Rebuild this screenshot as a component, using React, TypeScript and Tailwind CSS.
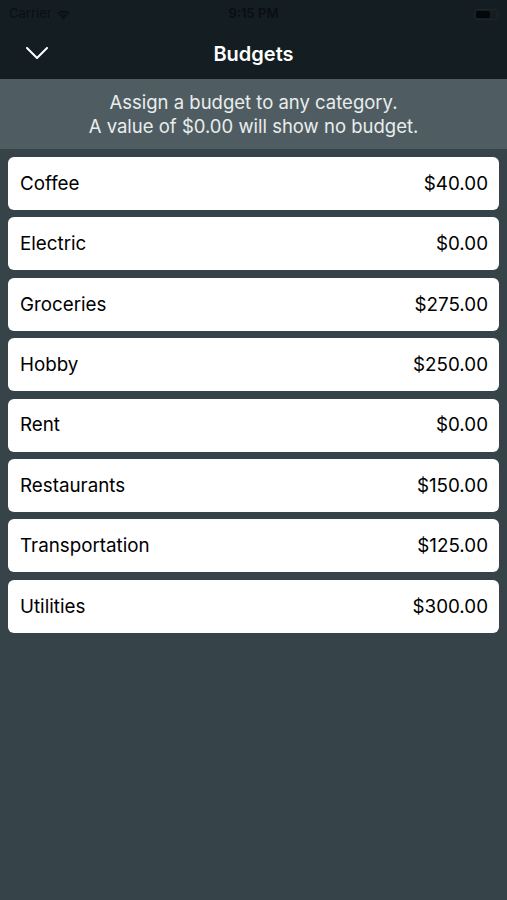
import React from 'react'

const budgets = [
    { name: 'Coffee', amount: '$40.00' },
    { name: 'Electric', amount: '$0.00' },
    { name: 'Groceries', amount: '$275.00' },
    { name: 'Hobby', amount: '$250.00' },
    { name: 'Rent', amount: '$0.00' },
    { name: 'Restaurants', amount: '$150.00' },
    { name: 'Transportation', amount: '$125.00' },
    { name: 'Utilities', amount: '$300.00' },
]

export default function App() {
    return (
        <div className="w-[507px] h-[900px] flex flex-col bg-[#364449] font-['Inter',sans-serif] overflow-hidden">
            <div className="bg-[#141d21] flex flex-col">
                <div className="h-[28px] flex flex-row items-center justify-between px-[9px] text-[#0a0f11]">
                    <div className="flex flex-row items-center gap-x-1 w-[150px]">
                        <span className="text-[13px]">Carrier</span>
                        <svg width="15" height="11" viewBox="0 0 15 11">
                            <path d="M7.5 10.5 L5.2 8 A3.3 3.3 0 0 1 9.8 8 Z" fill="#0a0f11" />
                            <path d="M3.6 6.3 A5.6 5.6 0 0 1 11.4 6.3 L10.3 7.4 A4 4 0 0 0 4.7 7.4 Z" fill="#0a0f11" />
                            <path d="M1.5 4.2 A8.6 8.6 0 0 1 13.5 4.2 L12.4 5.3 A7 7 0 0 0 2.6 5.3 Z" fill="#0a0f11" />
                        </svg>
                    </div>
                    <span className="text-[13px] font-semibold">9:15 PM</span>
                    <div className="w-[150px] flex flex-row justify-end">
                        <div className="w-[24px] h-[11px] rounded-[3px] border border-[#1d2629] p-[1px] flex flex-row">
                            <div className="w-[14px] h-full rounded-[2px] bg-[#050809]" />
                        </div>
                    </div>
                </div>
                <div className="h-[51px] relative flex flex-row items-center justify-center">
                    <svg className="absolute left-[26px] top-[19px]" width="22" height="12" viewBox="0 0 22 12">
                        <path d="M1 1 L11 11 L21 1" fill="none" stroke="white" strokeWidth="2" strokeLinecap="round" strokeLinejoin="round" />
                    </svg>
                    <h1 className="text-white text-[20px] font-semibold">Budgets</h1>
                </div>
            </div>

            <div className="bg-[#4f5d62] h-[70px] flex flex-col items-center justify-center text-[#e9eded] text-[18.5px] leading-[24px]">
                <p>Assign a budget to any category.</p>
                <p>A value of $0.00 will show no budget.</p>
            </div>

            <div className="flex flex-col gap-y-[7.4px] px-[8px] pt-[8px]">
                {budgets.map((b) => (
                    <div key={b.name} className="h-[53px] bg-white rounded-[6px] flex flex-row items-center justify-between pl-[12px] pr-[11px] pt-[1px] text-black text-[18.8px]">
                        <span>{b.name}</span>
                        <span>{b.amount}</span>
                    </div>
                ))}
            </div>
        </div>
    )
}
